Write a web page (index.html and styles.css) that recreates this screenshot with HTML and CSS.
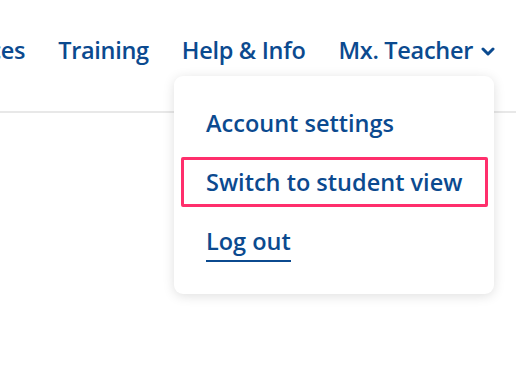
FILE: index.html
```html
<!DOCTYPE html>
<html>
<head>
<meta charset="utf-8">
<link rel="stylesheet" href="styles.css">
</head>
<body>
<header class="header">
  <nav class="nav">
    <a class="nav-link">Resources</a>
    <a class="nav-link">Training</a>
    <a class="nav-link">Help &amp; Info</a>
    <a class="nav-link user">Mx. Teacher
      <svg class="chev" width="14" height="10" viewBox="0 0 14 10"><path d="M2 2 L7 7 L12 2" fill="none" stroke="#0b4a8f" stroke-width="3" stroke-linecap="round" stroke-linejoin="round"/></svg>
    </a>
  </nav>
</header>
<div class="menu">
  <a class="menu-item">Account settings</a>
  <a class="menu-item active">Switch to student view</a>
  <a class="menu-item"><span class="logout">Log out</span></a>
</div>
</body>
</html>
```
FILE: styles.css
```css
html, body {
  margin: 0;
  padding: 0;
  background: #fff;
  font-family: "Open Sans", "Noto Sans", sans-serif;
  color: #0b4a8f;
}
.header {
  height: 111px;
  border-bottom: 2px solid #e8e8e8;
  overflow: hidden;
  position: relative;
}
.nav {
  position: absolute;
  right: 21px;
  top: 34px;
  display: flex;
  align-items: center;
  gap: 33px;
  white-space: nowrap;
}
.nav-link {
  font-size: 23.5px;
  font-weight: 600;
  letter-spacing: -0.3px;
  line-height: 32px;
  display: flex;
  align-items: center;
  gap: 8px;
}
.chev { margin-top: 4px; }
.menu {
  position: absolute;
  left: 174px;
  top: 76px;
  width: 320px;
  box-sizing: border-box;
  padding: 22px 6px 28px 7px;
  background: #fff;
  border-radius: 9px;
  box-shadow: 0 2px 12px rgba(0,0,0,0.13);
  display: flex;
  flex-direction: column;
  gap: 9px;
}
.menu-item {
  font-size: 23.5px;
  font-weight: 600;
  line-height: 44px;
  padding: 0 22px;
  border: 3px solid transparent;
  border-radius: 2px;
}
.menu-item.active {
  border-color: #ff2f6c;
}
.logout {
  border-bottom: 2px solid #0b4a8f;
  padding-bottom: 3px;
}
```
